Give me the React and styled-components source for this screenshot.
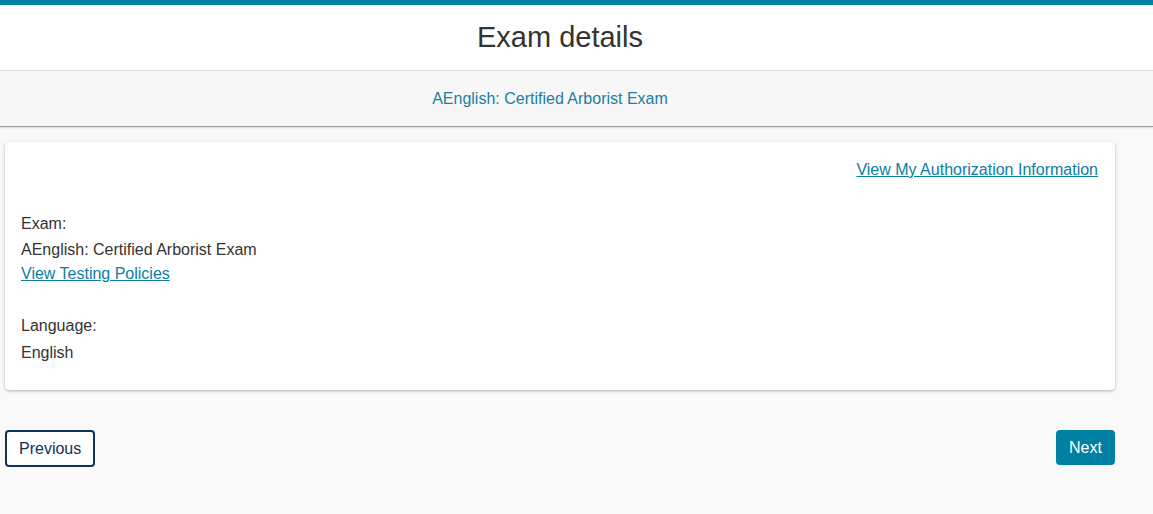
import React from "react";
import styled, { createGlobalStyle } from "styled-components";

const GlobalStyle = createGlobalStyle`
	html, body {
		margin: 0;
		padding: 0;
		background: #f9f9f9;
		font-family: "Liberation Sans", Arial, sans-serif;
		color: #333333;
	}
`;

const TopStrip = styled.div`
	height: 5px;
	background: #0080a3;
`;

const Header = styled.header`
	height: 65px;
	background: #ffffff;
	border-bottom: 1px solid #dddddd;
	display: flex;
	align-items: center;
	justify-content: center;
	padding-right: 33px;
	h1 {
		margin: 0;
		font-size: 29px;
		font-weight: 400;
		color: #333333;
	}
`;

const SubHeader = styled.div`
	height: 55px;
	background: #f7f7f7;
	border-bottom: 1px solid #9a9a9a;
	box-shadow: 0 1px 2px rgba(0, 0, 0, 0.12);
	display: flex;
	align-items: center;
	justify-content: center;
	padding-right: 53px;
	font-size: 16px;
	color: #1b7fa0;
`;

const Main = styled.main`
	padding: 15px 38px 40px 5px;
`;

const Card = styled.section`
	background: #ffffff;
	border-radius: 4px;
	box-shadow: 0 1px 3px rgba(0, 0, 0, 0.3);
	padding: 16px 16px 25px;
`;

const TopRow = styled.div`
	display: flex;
	justify-content: flex-end;
	padding-right: 1px;
`;

const Link = styled.a`
	font-size: 16px;
	line-height: 24px;
	color: #0b7ea0;
	text-decoration: underline;
	cursor: pointer;
`;

const Field = styled.div`
	margin-top: ${(p) => (p.$first ? "30px" : "28px")};
	display: flex;
	flex-direction: column;
	align-items: flex-start;
`;

const Label = styled.div`
	font-size: 16px;
	line-height: 24px;
	color: #333333;
`;

const Value = styled.div`
	font-size: 16px;
	line-height: 24px;
	margin-top: ${(p) => p.$gap || 3}px;
	color: #333333;
`;

const Actions = styled.div`
	display: flex;
	justify-content: space-between;
	align-items: flex-start;
	margin-top: 40px;
`;

const Button = styled.button`
	font-family: "Liberation Sans", Arial, sans-serif;
	font-size: 16px;
	border-radius: 4px;
	padding: 0 12px;
	cursor: pointer;
	height: ${(p) => (p.$primary ? "35px" : "37px")};
	border: ${(p) => (p.$primary ? "none" : "2px solid #0d3356")};
	background: ${(p) => (p.$primary ? "#0080a3" : "#ffffff")};
	color: ${(p) => (p.$primary ? "#ffffff" : "#0d3356")};
	width: ${(p) => (p.$primary ? "59px" : "90px")};
`;

const App = () => {
	return (
		<>
			<GlobalStyle />
			<TopStrip />
			<Header>
				<h1>Exam details</h1>
			</Header>
			<SubHeader>AEnglish: Certified Arborist Exam</SubHeader>
			<Main>
				<Card>
					<TopRow>
						<Link>View My Authorization Information</Link>
					</TopRow>
					<Field $first>
						<Label>Exam:</Label>
						<Value $gap={2}>AEnglish: Certified Arborist Exam</Value>
						<Link>View Testing Policies</Link>
					</Field>
					<Field>
						<Label>Language:</Label>
						<Value>English</Value>
					</Field>
				</Card>
				<Actions>
					<Button>Previous</Button>
					<Button $primary>Next</Button>
				</Actions>
			</Main>
		</>
	);
};

export default App;
